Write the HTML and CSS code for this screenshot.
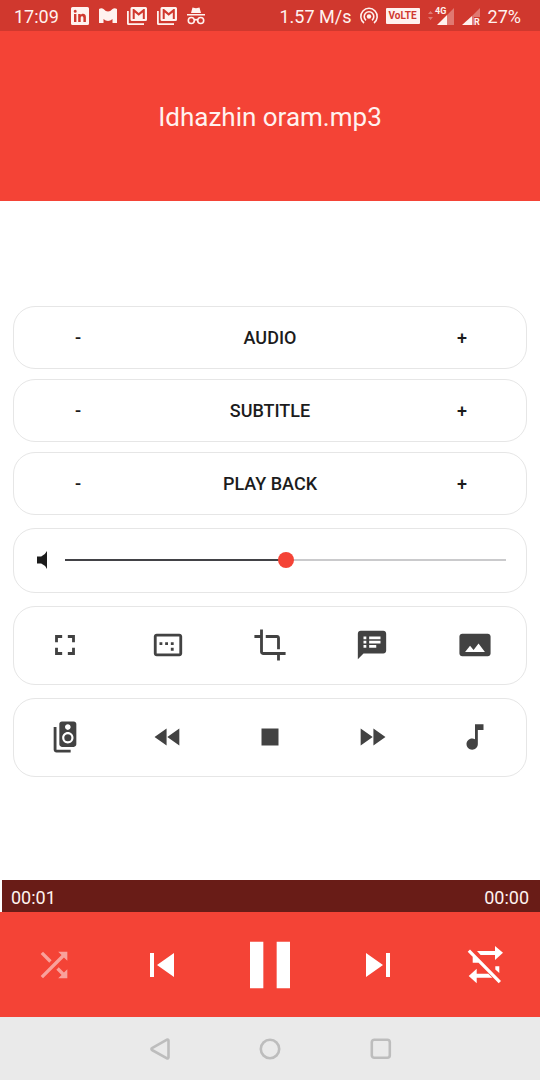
FILE: index.html
```html
<!DOCTYPE html>
<html lang="en">
<head>
<meta charset="utf-8">
<meta name="viewport" content="width=device-width, initial-scale=1">
<title>Player remote</title>
<link rel="stylesheet" href="styles.css">
</head>
<body>
<div class="screen">
  <div class="status">
    <div class="status-group">
      <span class="clock">17:09</span>
      <svg class="status-icon" viewBox="0 0 18 18" aria-hidden="true"><path fill-rule="evenodd" d="M1.500 0h15A1.500 1.500 0 0 1 18 1.500v15a1.500 1.500 0 0 1-1.500 1.500h-15A1.500 1.500 0 0 1 0 16.500v-15A1.500 1.500 0 0 1 1.500 0zM3 7v8h2.400V7zM4.200 2.800a1.500 1.500 0 1 0 0 3 1.500 1.500 0 0 0 0-3zM7.200 7v8h2.500v-4.200c0-2.200 2.700-2.200 2.700 0V15h2.500v-5c0-3.800-4-4-5.200-2V7z"/></svg>
      <svg class="status-icon" viewBox="0 0 18 18" aria-hidden="true"><path d="M0 2q2.500-1.500 4.500 0Q9 7 13.500 2q2-1.500 4.500 0v14h-4.500v-4Q9 16 4.500 12v4H0z"/></svg>
      <svg class="mail-icon" viewBox="0 0 20 18" aria-hidden="true"><path d="M0 4h1.800v12.200H17V18H1.500A1.500 1.500 0 0 1 0 16.500z"/><path fill-rule="evenodd" d="M5 0h13.500A1.500 1.500 0 0 1 20 1.500v11a1.500 1.500 0 0 1-1.500 1.500H5a1.500 1.500 0 0 1-1.500-1.500v-11A1.500 1.500 0 0 1 5 0zM5.700 2v10h2V5.500l4 3.300 4.100-3.300V12h2V2h-1.300l-4.800 4L7 2z"/></svg>
      <svg class="mail-icon" viewBox="0 0 20 18" aria-hidden="true"><path d="M0 4h1.800v12.200H17V18H1.500A1.500 1.500 0 0 1 0 16.500z"/><path fill-rule="evenodd" d="M5 0h13.500A1.500 1.500 0 0 1 20 1.500v11a1.500 1.500 0 0 1-1.500 1.500H5a1.500 1.500 0 0 1-1.500-1.500v-11A1.500 1.500 0 0 1 5 0zM5.700 2v10h2V5.500l4 3.300 4.100-3.300V12h2V2h-1.300l-4.800 4L7 2z"/></svg>
      <svg class="status-icon" viewBox="0 0 18 18" aria-hidden="true"><path d="M5.500.5 9 1.200l3.500-.7L14 6H4zM0 7h18v1.600H0z"/><g class="outline"><circle cx="4.300" cy="13.500" r="3"/><circle cx="13.700" cy="13.500" r="3"/><path d="M7.300 13.200q1.700-1.200 3.400 0"/></g></svg>
    </div>
    <div class="status-group">
      <span>1.57 M/s</span>
      <svg class="status-icon" viewBox="0 0 18 18" aria-hidden="true"><circle cx="9" cy="9.500" r="2.200"/><g class="outline"><path d="M4 16a8.200 8.200 0 1 1 10 0"/><path d="M6 13.300a4.800 4.800 0 1 1 6 0"/></g></svg>
      <span class="volte">VoLTE</span>
      <svg class="signal-wide" viewBox="0 -2 26 24" aria-hidden="true"><path class="faint" d="M0 8l2.500-3L5 8zM0 11h5l-2.500 3zM26 2v17h-7V9z"/><path d="M19 9v10H9z"/><text class="net" x="7" y="8">4G</text></svg>
      <svg class="signal" viewBox="0 -2 18 24" aria-hidden="true"><path class="faint" d="M18 2v9h-6v8h-2v-9z"/><path d="M10 10v9H0z"/><text class="net" x="12" y="19">R</text></svg>
      <span class="battery">27%</span>
    </div>
  </div>

  <header class="title-bar"><h1 class="title">Idhazhin oram.mp3</h1></header>

  <main class="panel">
    <div class="adjusters">
      <div class="card adjust"><button class="adjust-btn" aria-label="Audio down">-</button><span>AUDIO</span><button class="adjust-btn" aria-label="Audio up">+</button></div>
      <div class="card adjust"><button class="adjust-btn" aria-label="Subtitle down">-</button><span>SUBTITLE</span><button class="adjust-btn" aria-label="Subtitle up">+</button></div>
      <div class="card adjust"><button class="adjust-btn" aria-label="Play back down">-</button><span>PLAY BACK</span><button class="adjust-btn" aria-label="Play back up">+</button></div>
    </div>
    <div class="card volume">
      <svg class="volume-icon" viewBox="0 0 10 18" aria-hidden="true"><path d="M0 5.500h4.200Q8 4 10 0v18q-2-4-5.800-5.500H0z"/></svg>
      <input class="slider" type="range" min="0" max="100" value="50" aria-label="Volume">
    </div>
    <div class="card tools">
      <button class="tool" aria-label="Fullscreen"><svg class="icon" viewBox="0 0 24 24"><path d="M7 14H5v5h5v-2H7v-3zm-2-4h2V7h3V5H5v5zm12 7h-3v2h5v-5h-2v3zM14 5v2h3v3h2V5h-5z"/></svg></button>
      <button class="tool" aria-label="Aspect ratio"><svg class="icon" viewBox="0 0 24 24"><path d="M16 10h-2v2h2v-2zm0 4h-2v2h2v-2zm-8-4H6v2h2v-2zm4 0h-2v2h2v-2zm8-6H4c-1.100 0-2 .9-2 2v12c0 1.100.9 2 2 2h16c1.100 0 2-.9 2-2V6c0-1.100-.9-2-2-2zm0 14H4V6h16v12z"/></svg></button>
      <button class="tool" aria-label="Crop"><svg class="icon" viewBox="0 0 24 24"><path d="M17 15h2V7c0-1.100-.9-2-2-2H9v2h8v8zM7 17V1H5v4H1v2h4v10c0 1.100.9 2 2 2h10v4h2v-4h4v-2H7z"/></svg></button>
      <button class="tool" aria-label="Subtitles"><svg class="icon" viewBox="0 0 24 24"><path d="M20 2H4c-1.100 0-1.990.9-1.990 2L2 22l4-4h14c1.100 0 2-.9 2-2V4c0-1.100-.9-2-2-2zM8 14H6v-2h2v2zm0-3H6V9h2v2zm0-3H6V6h2v2zm7 6h-5v-2h5v2zm3-3h-8V9h8v2zm0-3h-8V6h8v2z"/></svg></button>
      <button class="tool" aria-label="Snapshot"><svg class="icon" viewBox="0 0 24 24"><path d="M23 18V6c0-1.100-.9-2-2-2H3c-1.100 0-2 .9-2 2v12c0 1.100.9 2 2 2h18c1.100 0 2-.9 2-2zM8.500 12.500l2.500 3.010L14.500 11l4.500 6H5l3.500-4.500z"/></svg></button>
    </div>
    <div class="card tools">
      <button class="tool" aria-label="Audio device"><svg class="icon" viewBox="0 0 24 24"><path d="M18.200 1H9.800C8.810 1 8 1.810 8 2.800v14.400c0 .99.810 1.790 1.800 1.790l8.400.010c.99 0 1.800-.810 1.800-1.800V2.800c0-.99-.810-1.800-1.800-1.800zM14 3c1.100 0 2 .89 2 2s-.9 2-2 2-2-.89-2-2 .9-2 2-2zm0 13.500c-2.210 0-4-1.790-4-4s1.790-4 4-4 4 1.790 4 4-1.790 4-4 4z"/><circle cx="14" cy="12.500" r="2.500"/><path d="M6 5H4v16c0 1.100.89 2 2 2h10v-2H6V5z"/></svg></button>
      <button class="tool" aria-label="Rewind"><svg class="icon" viewBox="0 0 24 24"><path d="M11 18V6l-8.500 6 8.500 6zm.5-6l8.500 6V6l-8.500 6z"/></svg></button>
      <button class="tool" aria-label="Stop"><svg class="icon" viewBox="0 0 24 24"><path d="M6 6h12v12H6z"/></svg></button>
      <button class="tool" aria-label="Fast forward"><svg class="icon" viewBox="0 0 24 24"><path d="M4 18l8.500-6L4 6v12zm9-12v12l8.500-6L13 6z"/></svg></button>
      <button class="tool" aria-label="Audio track"><svg class="icon" viewBox="0 0 24 24"><path d="M12 3v10.550c-.59-.34-1.270-.55-2-.55-2.210 0-4 1.790-4 4s1.790 4 4 4 4-1.790 4-4V7h4V3h-6z"/></svg></button>
    </div>
  </main>

  <div class="times"><span>00:01</span><span>00:00</span></div>

  <div class="transport">
    <button class="control" aria-label="Shuffle"><svg class="icon-shuffle" viewBox="0 0 24 24"><path d="M10.590 9.170L5.410 4 4 5.410l5.170 5.170 1.420-1.410zM14.500 4l2.040 2.040L4 18.590 5.410 20 17.960 7.460 20 9.500V4h-5.500zm.330 9.410l-1.410 1.410 3.130 3.130L14.500 20H20v-5.500l-2.040 2.040-3.130-3.130z"/></svg></button>
    <button class="control" aria-label="Previous"><svg class="icon-large" viewBox="0 0 24 24"><path d="M6 6h2v12H6zm3.500 6l8.500 6V6z"/></svg></button>
    <button class="control" aria-label="Pause"><svg class="icon-pause" viewBox="0 0 24 24"><path d="M6 19h4V5H6v14zm8-14v14h4V5h-4z"/></svg></button>
    <button class="control" aria-label="Next"><svg class="icon-large" viewBox="0 0 24 24"><path d="M6 18l8.500-6L6 6v12zM16 6v12h2V6h-2z"/></svg></button>
    <button class="control" aria-label="Repeat off"><svg class="icon-large" viewBox="0 0 48 48"><path d="M15 10h18V5l8 6.700-8 7.300v-5H18.600zM10.700 15.300l6 6.400h-6zM5.700 10.700 8 8.600 39 40l-2.300 2.200zM33.300 25.300h4V32l-4-3.600zM6.700 35l8-7.300v5h11.600l4 4H14.700v5.600z"/></svg></button>
  </div>

  <nav class="nav">
    <button class="nav-btn" aria-label="Back"><svg class="nav-icon" viewBox="0 0 24 24"><path d="M20.500 3.500v17a1 1 0 0 1-1.500.8L4 13a1 1 0 0 1 0-1.800l15-8.500a1 1 0 0 1 1.500.8z"/></svg></button>
    <button class="nav-btn" aria-label="Home"><svg class="nav-icon" viewBox="0 0 24 24"><circle cx="12" cy="12" r="9.200"/></svg></button>
    <button class="nav-btn" aria-label="Recent apps"><svg class="nav-icon" viewBox="0 0 24 24"><rect x="3.800" y="2.800" width="18" height="18" rx="2.500"/></svg></button>
  </nav>
</div>
</body>
</html>
```
FILE: styles.css
```css
* { box-sizing: border-box; }

body {
  margin: 0;
  background: #fff;
  color: #1c1c1c;
  font-family: Roboto, sans-serif;
  font-size: 18px;
}

button {
  display: flex;
  align-items: center;
  justify-content: center;
  margin: 0;
  padding: 0;
  border: 0;
  background: none;
  color: inherit;
  font: inherit;
}

svg { display: block; flex: none; overflow: visible; fill: currentColor; }

.screen {
  display: flex;
  flex-direction: column;
  min-height: 100vh;
}

.status {
  display: flex;
  justify-content: space-between;
  align-items: center;
  height: 31px;
  padding: 1px 19px 0 14px;
  background: #d0382e;
  color: #fff2ef;
}

.status-group { display: flex; align-items: center; gap: 10px; }
.status-group + .status-group { gap: 8px; }
.clock { margin-right: 2px; }
.status-icon { width: 18px; height: 18px; }
.mail-icon { width: 20px; height: 18px; }
.outline { fill: none; stroke: currentColor; stroke-width: 1.6; }

.volte {
  padding: 0 3px;
  border-radius: 1px;
  background: #fff2ef;
  color: #d0382e;
  font-size: 10px;
  font-weight: 700;
  line-height: 16px;
}

.signal-wide { width: 26px; height: 24px; }
.signal { width: 18px; height: 24px; }
.faint { opacity: 0.35; }
.net { font-size: 9px; font-weight: 700; }

.title-bar {
  display: flex;
  align-items: center;
  justify-content: center;
  height: 170px;
  padding-top: 2px;
  background: #f44336;
  color: #fff2ef;
}

.title { margin: 0; font-size: 26px; font-weight: 400; line-height: 32px; }

.panel {
  display: flex;
  flex: 1;
  flex-direction: column;
  justify-content: center;
  gap: 13px;
  padding: 1px 13px 0;
}

.adjusters { display: flex; flex-direction: column; gap: 10px; }

.card {
  border: 1px solid #e6e6e6;
  border-radius: 22px;
  background: #fff;
}

.adjust {
  display: grid;
  grid-template-columns: 1fr 2fr 1fr;
  align-items: stretch;
  height: 63px;
  font-weight: 500;
  line-height: 61px;
  text-align: center;
}

.volume {
  display: flex;
  align-items: center;
  gap: 10px;
  height: 65px;
  padding: 0 12px 0 23px;
}

.volume-icon { width: 10px; height: 18px; }

.slider {
  flex: 1;
  min-width: 0;
  height: 24px;
  margin: 0;
  appearance: none;
  background:
    linear-gradient(to right, #424246 50%, #cacacc 50%)
    center / calc(100% - 16px) 2px no-repeat;
}

.slider::-webkit-slider-thumb {
  width: 16px;
  height: 16px;
  border-radius: 50%;
  appearance: none;
  background: #f44336;
}

.tools {
  display: grid;
  grid-template-columns: repeat(5, 1fr);
  height: 79px;
  color: #424242;
}

.icon { width: 34px; height: 34px; }

.times {
  display: flex;
  align-items: center;
  justify-content: space-between;
  height: 32px;
  margin-left: 2px;
  padding: 2px 11px 0 9px;
  background: #691c17;
  color: #fff2ef;
}

.transport {
  display: grid;
  grid-template-columns: repeat(5, 1fr);
  height: 105px;
  background: #f44336;
  color: #fff;
}

.icon-shuffle { width: 40px; height: 40px; opacity: 0.5; }
.icon-large { width: 48px; height: 48px; }
.icon-pause { width: 80px; height: 80px; }

.nav {
  display: flex;
  align-items: center;
  justify-content: center;
  gap: 62px;
  height: 63px;
  background: #eaeaea;
  color: #bdbdbd;
}

.nav-btn { width: 48px; height: 48px; }
.nav-icon { width: 24px; height: 24px; fill: none; stroke: currentColor; stroke-width: 2.6; }
```
